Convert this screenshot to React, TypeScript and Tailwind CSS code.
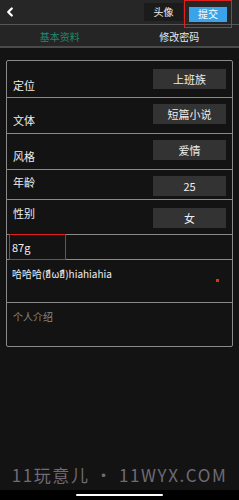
import { ChevronLeft } from "lucide-react";

const rows = [
  { label: "定位", value: "上班族", h: "h-[37px]", pt: "pt-[8px]", lt: "pt-[17px]" },
  { label: "文体", value: "短篇小说", h: "h-[36px]", pt: "pt-[6px]", lt: "pt-[15px]" },
  { label: "风格", value: "爱情", h: "h-[36px]", pt: "pt-[6px]", lt: "pt-[15px]" },
  { label: "年龄", value: "25", h: "h-[30px]", pt: "pt-[6px]", lt: "pt-[5px]" },
  { label: "性别", value: "女", h: "h-[35px]", pt: "pt-[8px]", lt: "pt-[6px]" },
];

export default function App() {
  return (
    <div
      className="w-[239px] h-[500px] bg-[#131313] flex flex-col overflow-hidden"
      style={{ fontFamily: '"Noto Sans CJK SC", "Noto Sans", sans-serif' }}
    >
      {/* Header */}
      <div className="h-[25px] bg-[#262626] border-b border-[#555] flex items-center relative">
        <ChevronLeft className="w-[14px] h-[14px] text-white ml-[3px]" strokeWidth={4} />
        <div className="ml-auto flex items-center h-full">
          <button className="w-[39px] h-[18px] bg-[#1b1b1b] text-[10px] text-[#eee] leading-none">
            头像
          </button>
          <div className="ml-[1px] w-[48px] h-[28px] border border-[#e0201c] flex items-center justify-center mr-[7px] self-start relative z-10">
            <button className="w-[38px] h-[15px] bg-[#3aa3ea] text-[10px] text-white leading-none">
              提交
            </button>
          </div>
        </div>
      </div>

      {/* Tabs */}
      <div className="h-[23px] bg-[#252525] border-b-2 border-[#4a4a4a] flex text-[10px] leading-none">
        <div className="flex-1 flex items-center justify-center text-[#1e8a6e] pt-[2px]">基本资料</div>
        <div className="flex-1 flex items-center justify-center text-[#e8e8e8] pt-[2px]">修改密码</div>
      </div>

      {/* Card */}
      <div className="mx-[6px] mt-[12px] border border-[#8a8a8a] rounded-[2px] text-[11px] text-[#eee]">
        {rows.map((r) => (
          <div key={r.label} className={`${r.h} border-b border-[#8a8a8a] flex px-[6px]`}>
            <div className={`${r.lt} leading-[14px]`}>{r.label}</div>
            <div className={`ml-auto ${r.pt}`}>
              <div className="w-[73px] h-[20px] bg-[#333] flex items-center justify-center leading-none text-[11px]">
                {r.value}
              </div>
            </div>
          </div>
        ))}
        <div className="relative h-[25px] border-b border-[#8a8a8a] flex items-center px-[5px] leading-none">
          87g
          <span className="absolute left-[2px] -top-[1px] w-[57px] h-[26px] border border-[#e0201c]" />
        </div>
        <div className="h-[43px] border-b border-[#8a8a8a] px-[5px] pt-[9px] flex relative">
          <span className="leading-none text-[10px]">哈哈哈(ฮืωฮื)hiahiahia</span>
          <span className="absolute right-[13px] top-[19px] w-[3px] h-[3px] bg-[#d43a10]" />
        </div>
        <div className="h-[43px] px-[6px] pt-[9px] text-[#8a8a8a] text-[10px] leading-none">个人介绍</div>
      </div>

      {/* Watermark */}
      <div className="mt-auto h-[24px] flex items-start justify-center text-[17px] text-[#6f6a75] leading-none tracking-[1.6px]">
        11玩意儿 • 11WYX.COM
      </div>
      <div className="h-[10px] bg-black flex items-center justify-center">
        <div className="w-[87px] h-[2px] bg-white rounded-full" />
      </div>
    </div>
  );
}
